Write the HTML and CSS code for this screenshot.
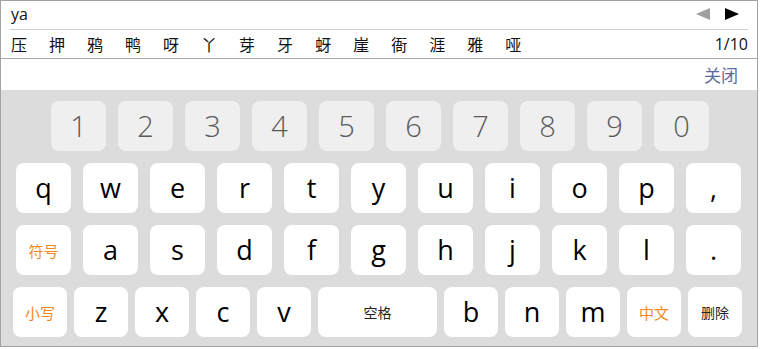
FILE: index.html
```html
<!DOCTYPE html>
<html lang="zh">
<head>
<meta charset="utf-8">
<link rel="stylesheet" href="styles.css">
</head>
<body>
<div class="ime">
  <div class="comp">
    <span class="pinyin">ya</span>
    <span class="arrows">
      <svg class="arr" width="14" height="12" viewBox="0 0 14 12"><polygon points="14,0 14,12 0,6" fill="#a0a0a0"/></svg>
      <svg class="arr" width="14" height="12" viewBox="0 0 14 12"><polygon points="0,0 0,12 14,6" fill="#000"/></svg>
    </span>
  </div>
  <div class="cands">
    <div class="list">
      <span>压</span><span>押</span><span>鸦</span><span>鸭</span><span>呀</span><span>丫</span><span>芽</span><span>牙</span><span>蚜</span><span>崖</span><span>衙</span><span>涯</span><span>雅</span><span>哑</span>
    </div>
    <span class="page">1/10</span>
  </div>
  <div class="closebar"><span class="close">关闭</span></div>
  <div class="kb">
    <div class="row nums">
      <div class="key num">1</div><div class="key num">2</div><div class="key num">3</div><div class="key num">4</div><div class="key num">5</div><div class="key num">6</div><div class="key num">7</div><div class="key num">8</div><div class="key num">9</div><div class="key num">0</div>
    </div>
    <div class="row r2">
      <div class="key">q</div><div class="key">w</div><div class="key">e</div><div class="key">r</div><div class="key">t</div><div class="key">y</div><div class="key">u</div><div class="key">i</div><div class="key">o</div><div class="key">p</div><div class="key">,</div>
    </div>
    <div class="row r3">
      <div class="key fn orange">符号</div><div class="key">a</div><div class="key">s</div><div class="key">d</div><div class="key">f</div><div class="key">g</div><div class="key">h</div><div class="key">j</div><div class="key">k</div><div class="key">l</div><div class="key">.</div>
    </div>
    <div class="row r4">
      <div class="key fn orange">小写</div><div class="key">z</div><div class="key">x</div><div class="key">c</div><div class="key">v</div><div class="key fn space">空格</div><div class="key">b</div><div class="key">n</div><div class="key">m</div><div class="key fn orange">中文</div><div class="key fn">删除</div>
    </div>
  </div>
</div>
</body>
</html>
```
FILE: styles.css
```css
* { box-sizing: border-box; }
html, body { margin: 0; padding: 0; background: #fff; }
body { font-family: "Open Sans", "Noto Sans CJK SC", sans-serif; }
.ime {
  width: 758px;
  height: 347px;
  border: 1px solid #a3a3a3;
  display: flex;
  flex-direction: column;
  background: #fff;
}
.comp {
  height: 29px;
  margin: 0 9px;
  border-bottom: 1px solid #cfcfcf;
  display: flex;
  align-items: center;
  justify-content: space-between;
}
.pinyin { font-size: 16px; color: #111; padding-left: 1px; margin-top: -2px; }
.arrows { display: flex; gap: 15px; padding-right: 9px; margin-top: -3px; }
.arr { display: block; }
.cands {
  height: 29px;
  border-bottom: 1px solid #a8a8a8;
  display: flex;
  align-items: center;
  justify-content: space-between;
  padding: 0 9px 0 10px;
}
.list { display: flex; gap: 22px; font-family: "Noto Sans CJK SC", sans-serif; font-size: 16px; color: #111; }
.page { font-size: 16px; color: #111; }
.closebar {
  height: 31px;
  display: flex;
  justify-content: flex-end;
  align-items: center;
  padding-right: 19px;
}
.close { font-family: "Noto Sans CJK SC", sans-serif; font-size: 17px; color: #5b6b9b; }
.kb {
  flex: 1;
  background: #dcdcdc;
  display: flex;
  flex-direction: column;
  gap: 12px;
  padding-top: 11px;
}
.row { display: flex; gap: 12px; height: 50px; }
.nums { padding-left: 50px; }
.r2, .r3 { padding-left: 15px; }
.r4 { padding-left: 12px; gap: 7px; }
.key {
  width: 55px;
  height: 50px;
  background: #fff;
  border-radius: 8px;
  display: flex;
  align-items: center;
  justify-content: center;
  font-size: 27px;
  color: #000;
  padding-bottom: 2px;
}
.r4 .key { width: 54px; }
.r4 .space { width: 119px; }
.num {
  background: #efefef;
  color: #5a5a5a;
  font-weight: 300;
  font-size: 29px;
}
.fn {
  font-family: "Noto Sans CJK SC", sans-serif;
  font-size: 14px;
  color: #222;
  padding-bottom: 0;
}
.orange { color: #f08a1e; font-size: 15px; }
```
